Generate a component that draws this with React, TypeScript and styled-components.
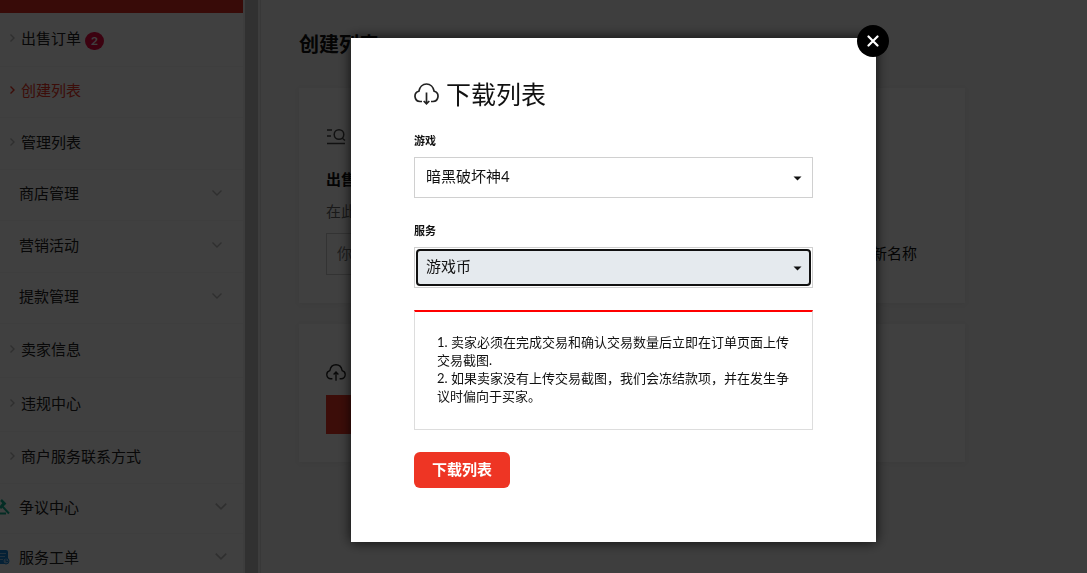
import React from "react";
import styled, { createGlobalStyle, css } from "styled-components";

const GlobalStyle = createGlobalStyle`
  *, *::before, *::after { box-sizing: border-box; }
  body {
    margin: 0;
    background: #f5f5f5;
    color: #111;
    font: 15px/20px Lato, "Noto Sans CJK SC", sans-serif;
  }
  h1, h2, h3, p, ul, ol { margin: 0; padding: 0; }
  button, input, select { font: inherit; color: inherit; }
`;

const Page = styled.div`
  display: flex;
  height: 100vh;
  overflow: hidden;
`;

const Sidebar = styled.aside`
  flex: 0 0 261px;
  display: flex;
  border-right: 1px solid #e0e0e0;
  background: #f3f3f3;
`;

const Menu = styled.nav`
  flex: 1;
  background: #fff;
`;

const MenuTop = styled.div`
  height: 13px;
  background: #e02c20;
`;

const Gutter = styled.div`
  flex: 0 0 13px;
  margin: 0 2px;
  background: #c1c1c1;
`;

const MenuItem = styled.a<{ $height: number; $active?: boolean }>`
  display: flex;
  align-items: center;
  height: ${(p) => p.$height}px;
  padding: 0 14px 4px 0;
  border-bottom: 1px solid #f5f5f5;
  color: ${(p) => (p.$active ? "#ee3524" : "#222")};
  text-decoration: none;
`;

const Lead = styled.span<{ $wide?: boolean }>`
  display: flex;
  align-items: center;
  width: ${(p) => (p.$wide ? 21 : 19)}px;
  padding-left: ${(p) => (p.$wide ? 10 : 0)}px;
`;

const Arrow = styled.svg<{ $active?: boolean }>`
  display: block;
  fill: none;
  stroke: ${(p) => (p.$active ? "#ee3524" : "#bbb")};
  stroke-width: 1.4;
`;

const Chevron = styled(Arrow)<{ $end?: boolean }>`
  margin-left: auto;
  margin-right: ${(p) => (p.$end ? 2 : 7)}px;
`;

const Badge = styled.span`
  width: 19px;
  height: 18px;
  margin: 6px 0 0 4px;
  border-radius: 9px;
  background: #ee0a42;
  color: #fff;
  font-size: 12px;
  font-weight: 700;
  line-height: 18px;
  text-align: center;
`;

const Main = styled.main`
  flex: 1;
  padding: 30px 38px;
`;

const PageTitle = styled.h1`
  font-size: 20px;
  line-height: 28px;
  margin-bottom: 30px;
`;

const Card = styled.section`
  display: flex;
  flex-direction: column;
  align-items: flex-start;
  max-width: 666px;
  margin-bottom: 21px;
  padding: 40px 27px 28px;
  background: #fff;
  box-shadow: 0 1px 6px rgba(0, 0, 0, 0.05);
`;

const CardTitle = styled.h2`
  margin-top: 24px;
  font-size: 15px;
  line-height: 20px;
`;

const CardText = styled.p`
  margin: 12px 0;
  color: #666;
`;

const NameRow = styled.div`
  display: flex;
  align-items: center;
  justify-content: space-between;
  width: 591px;
`;

const NameInput = styled.input`
  width: 440px;
  height: 42px;
  padding: 0 10px 2px;
  border: 1px solid #ccc;
  background: #fff;
  &::placeholder { color: #777; opacity: 1; }
`;

const LinkButton = styled.button`
  padding: 0 0 2px;
  border: 0;
  background: none;
`;

const UploadBar = styled.button`
  width: 200px;
  height: 39px;
  margin-top: 13px;
  border: 0;
  background: #ee3524;
`;

const Overlay = styled.div`
  position: fixed;
  inset: 0;
  display: flex;
  align-items: flex-start;
  justify-content: center;
  padding: 38px 0 0 140px;
  background: rgba(0, 0, 0, 0.75);
`;

const Dialog = styled.div`
  position: relative;
  flex: 0 1 525px;
  padding: 37px 63px 54px;
  background: #fff;
  box-shadow: 0 0 12px rgba(0, 0, 0, 0.8);
`;

const CloseButton = styled.button`
  position: absolute;
  top: -13px;
  right: -13px;
  display: flex;
  align-items: center;
  justify-content: center;
  width: 32px;
  height: 32px;
  padding: 0;
  border: 0;
  border-radius: 50%;
  background: #000;
`;

const DialogTitle = styled.h2`
  display: flex;
  align-items: center;
  gap: 7px;
  margin-bottom: 20px;
  font-size: 25px;
  font-weight: 400;
  line-height: 38px;
`;

const Field = styled.div`
  margin-bottom: 25px;
`;

const Label = styled.label`
  display: block;
  margin-bottom: 8px;
  font-size: 11px;
  font-weight: 700;
  line-height: 16px;
`;

const SelectBox = styled.div`
  position: relative;
  display: flex;
  height: 41px;
  padding: 1px;
  border: 1px solid #d0d0d0;
`;

const Select = styled.select<{ $focused?: boolean }>`
  flex: 1;
  padding: 0 8px 3px;
  appearance: none;
  outline: 0;
  border: 2px solid transparent;
  border-radius: 4px;
  background: #fff;
  ${(p) =>
    p.$focused &&
    css`
      border-color: #111;
      background: #e5eaee;
    `}
`;

const Caret = styled.svg`
  position: absolute;
  right: 10px;
  top: 18px;
  pointer-events: none;
`;

const Notes = styled.div`
  margin: -3px 0 22px;
  padding: 21px 20px 24px 22px;
  border: 1px solid #ddd;
  border-top: 2px solid #f00;
  font-size: 13px;
  line-height: 18px;
`;

const PrimaryButton = styled.button`
  display: block;
  height: 36px;
  padding: 0 18px 2px;
  border: 0;
  border-radius: 6px;
  background: #ee3524;
  color: #fff;
  font-weight: 700;
`;

type Entry = {
  label: string;
  height: number;
  lead?: "arrow" | "gavel" | "ticket";
  active?: boolean;
  badge?: string;
  open?: boolean;
};

const entries: Entry[] = [
  { label: "出售订单", height: 54, lead: "arrow", badge: "2" },
  { label: "创建列表", height: 51, lead: "arrow", active: true },
  { label: "管理列表", height: 52, lead: "arrow" },
  { label: "商店管理", height: 51, open: true },
  { label: "营销活动", height: 52, open: true },
  { label: "提款管理", height: 51, open: true },
  { label: "卖家信息", height: 54, lead: "arrow" },
  { label: "违规中心", height: 54, lead: "arrow" },
  { label: "商户服务联系方式", height: 52, lead: "arrow" },
  { label: "争议中心", height: 50, lead: "gavel", open: true },
  { label: "服务工单", height: 50, lead: "ticket", open: true },
];

const Gavel = () => (
  <svg width="10" height="16" viewBox="0 0 10 16" fill="none" stroke="#10b090">
    <path d="M1 1L5.500 5.500" strokeWidth="2.500" />
    <path d="M0 9L4 4.500" strokeWidth="3" />
    <path d="M2.500 7.500L9 14.500" strokeWidth="2" />
    <path d="M0 14.500H6" strokeWidth="2" />
  </svg>
);

const Ticket = () => (
  <svg width="10" height="16" viewBox="0 0 10 16">
    <path d="M0 1H6Q8 1 8 3V15H0Z" fill="#1484d8" />
    <path d="M0 4.500H6M0 7.500H5M0 10.500H3" stroke="#8cc4ee" />
    <circle cx="6" cy="12" r="3" fill="#8cc4ee" stroke="#1484d8" />
    <path d="M6 10V12.500H8" fill="none" stroke="#1484d8" />
  </svg>
);

const Cloud = ({ up, size = 25 }: { up?: boolean; size?: number }) => (
  <svg
    width={size}
    height={(size * 22) / 25}
    viewBox="0 0 25 22"
    fill="none"
    stroke="#222"
    strokeWidth="1.7"
  >
    <path d="M8 18.500H6A5.200 5.200 0 0 1 4.800 8.300C5.600 4 8.700 1 12.500 1s6.900 3 7.700 7.300A5.200 5.200 0 0 1 19 18.500H17" />
    {up ? (
      <path d="M12.500 21V10.500M9.500 13L12.500 10L15.500 13" />
    ) : (
      <path d="M12.500 9.500V20.500M9.700 18L12.500 20.800L15.300 18" />
    )}
  </svg>
);

export default function App() {
  return (
    <>
      <GlobalStyle />
      <Page>
        <Sidebar>
          <Menu>
            <MenuTop />
            {entries.map((e) => {
              const hasIcon = e.lead === "gavel" || e.lead === "ticket";
              return (
                <MenuItem key={e.label} href="#" $height={e.height} $active={e.active}>
                  <Lead $wide={e.lead === "arrow"}>
                    {e.lead === "arrow" && (
                      <Arrow width="5" height="8" viewBox="0 0 5 8" $active={e.active}>
                        <path d="M.5 .5L4 4L.5 7.500" />
                      </Arrow>
                    )}
                    {e.lead === "gavel" && <Gavel />}
                    {e.lead === "ticket" && <Ticket />}
                  </Lead>
                  {e.label}
                  {e.badge && <Badge>{e.badge}</Badge>}
                  {e.open && (
                    <Chevron
                      width={hasIcon ? 12 : 10}
                      height={hasIcon ? 7 : 6}
                      viewBox="0 0 10 6"
                      $end={hasIcon}
                    >
                      <path d="M.5 .5L5 5L9.500 .5" />
                    </Chevron>
                  )}
                </MenuItem>
              );
            })}
          </Menu>
          <Gutter />
        </Sidebar>
        <Main>
          <PageTitle>创建列表</PageTitle>
          <Card>
            <svg width="20" height="17" viewBox="0 0 20 17" fill="none" stroke="#444" strokeWidth="1.5">
              <path d="M1 2H6M1 8H5M1 15.500H19" />
              <circle cx="13" cy="6.500" r="4.800" />
              <path d="M16 10L19 12.500" />
            </svg>
            <CardTitle>出售</CardTitle>
            <CardText>在此</CardText>
            <NameRow>
              <NameInput aria-label="名称" placeholder="你" />
              <LinkButton type="button">更新名称</LinkButton>
            </NameRow>
          </Card>
          <Card>
            <Cloud up size={20} />
            <UploadBar type="button" aria-label="上传" />
          </Card>
        </Main>
      </Page>
      <Overlay>
        <Dialog role="dialog" aria-modal="true" aria-labelledby="dialog-title">
          <CloseButton type="button" aria-label="关闭">
            <svg width="12" height="12" viewBox="0 0 12 12" stroke="#fff" strokeWidth="2.200" strokeLinecap="round">
              <path d="M1.500 1.500L10.500 10.500M10.500 1.500L1.500 10.500" />
            </svg>
          </CloseButton>
          <DialogTitle id="dialog-title">
            <Cloud />
            下载列表
          </DialogTitle>
          <Field>
            <Label htmlFor="game">游戏</Label>
            <SelectBox>
              <Select id="game">
                <option>暗黑破坏神4</option>
              </Select>
              <Caret width="9" height="5" viewBox="0 0 9 5">
                <path d="M.5 .5H8.500L4.500 4.500Z" fill="#111" />
              </Caret>
            </SelectBox>
          </Field>
          <Field>
            <Label htmlFor="service">服务</Label>
            <SelectBox>
              <Select id="service" $focused>
                <option>游戏币</option>
              </Select>
              <Caret width="9" height="5" viewBox="0 0 9 5">
                <path d="M.5 .5H8.500L4.500 4.500Z" fill="#111" />
              </Caret>
            </SelectBox>
          </Field>
          <Notes>
            <p>1. 卖家必须在完成交易和确认交易数量后立即在订单页面上传交易截图.</p>
            <p>2. 如果卖家没有上传交易截图，我们会冻结款项，并在发生争议时偏向于买家。</p>
          </Notes>
          <PrimaryButton type="button">下载列表</PrimaryButton>
        </Dialog>
      </Overlay>
    </>
  );
}
